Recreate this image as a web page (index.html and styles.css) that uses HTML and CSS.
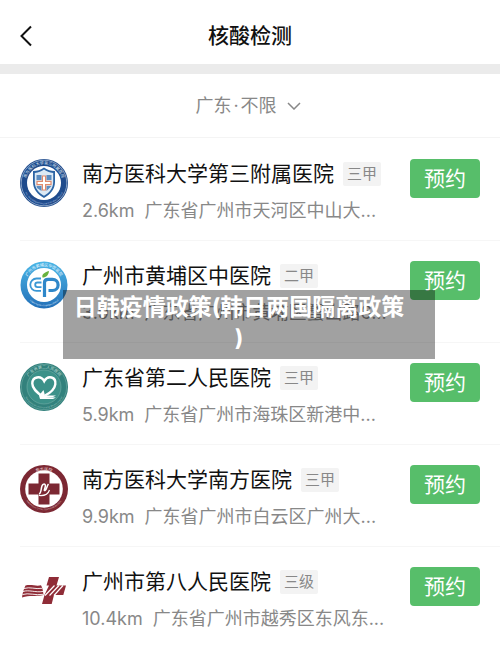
FILE: index.html
```
<!DOCTYPE html>
<html lang="zh-CN">
<head>
    <meta charset="UTF-8">
    <meta name="viewport" content="width=device-width, initial-scale=1.0">
    <title>核酸检测</title>
    <link rel="stylesheet" href="styles.css">
</head>
<body>

    <!-- Header -->
    <header class="header">
        <button type="button" class="back" aria-label="返回">
            <svg width="12" height="22" viewBox="0 0 12 22"><path d="M11 1.5L1.5 11L11 20.5"/></svg>
        </button>
        <h1>核酸检测</h1>
    </header>

    <!-- Region filter -->
    <div class="filter">
        <button type="button" class="filter-btn">
            <span>广东<span class="dot">·</span>不限</span>
            <svg width="14" height="8" viewBox="0 0 14 8"><path d="M1 1L7 7L13 1"/></svg>
        </button>
    </div>

    <!-- Hospital list -->
    <ul class="list">
        <li class="item">
            <svg class="logo" viewBox="0 0 48 48">
                <defs>
                    <path id="arcTop" d="M5.5 24a18.5 18.5 0 0 1 37 0"/>
                    <path id="arcBottom" d="M2.8 24a21.2 21.2 0 0 0 42.4 0"/>
                </defs>
                <circle cx="24" cy="24" r="24" fill="#1f4b8c"/>
                <circle cx="24" cy="24" r="22.8" fill="none" stroke="#c9d8ea" stroke-width=".6"/>
                <circle cx="24" cy="24" r="17" fill="#fff"/>
                <path d="M24 8.5C21 11 17 12 13 12V23c0 7 4.5 12.500 11 16c6.500-3.500 11-9 11-16V12C31 12 27 11 24 8.500z" fill="#2c64a4"/>
                <path d="M24 10.500C21.500 12.500 18.500 13.500 14.800 14v9c0 6 3.700 10.700 9.200 13.700c5.500-3 9.200-7.700 9.200-13.700v-9C29.500 13.500 26.500 12.500 24 10.500z" fill="#dbe9f5"/>
                <path d="M16.500 16h5v5h-5zM26.500 16h5v5h-5zM16.500 27h5v5L17 29zM26.500 27H31.500l-5 5z" fill="#5b8cc0"/>
                <path d="M22.400 17h3.200v5.400h5.400v3.200h-5.400V31h-3.200v-5.400H17v-3.200h5.400z" fill="#fff" stroke="#e08a6c" stroke-width="1.200"/>
                <text class="ring" fill="#dfe9f5"><textPath href="#arcTop" startOffset="50%">南方医科大学第三附属医院</textPath></text>
                <text class="ring ring-en" fill="#b5c8e0"><textPath href="#arcBottom" startOffset="50%">The Third Affiliated Hospital of Southern Medical</textPath></text>
            </svg>
            <div class="info">
                <div class="name"><h2>南方医科大学第三附属医院</h2><span class="tag">三甲</span></div>
                <p class="addr"><span class="km">2.6km</span>广东省广州市天河区中山大...</p>
            </div>
            <button type="button" class="book">预约</button>
        </li>

        <li class="item">
            <svg class="logo" viewBox="0 0 48 48">
                <defs>
                    <linearGradient id="blue" x1="0" y1="0" x2="0" y2="1">
                        <stop offset="0" stop-color="#4bb6e6"/>
                        <stop offset="1" stop-color="#2370b8"/>
                    </linearGradient>
                </defs>
                <circle cx="24" cy="24" r="23.5" fill="url(#blue)"/>
                <circle cx="24" cy="24" r="17" fill="#fff"/>
                <path d="M21 17.500h-4.500a6.200 6.200 0 0 0 0 12.400H21M21.500 21.500h-4a2.300 2.300 0 0 0 0 4.600h4" fill="none" stroke="#3a97d4" stroke-width="1.800"/>
                <path d="M24.500 36V21.500c0-2 1.500-3.200 3.500-3.200h4.500a5.500 5.500 0 0 1 0 11.200h-4" fill="none" stroke="#2f87c9" stroke-width="3.200"/>
                <path d="M22.500 16.500c-1-3 1.500-5 6.500-6.500c-.5 4-2.500 6.500-6.500 6.500z" fill="#68b23e"/>
                <text class="ring" fill="#e8f6ff"><textPath href="#arcTop" startOffset="50%">广州市黄埔区中医医院</textPath></text>
                <text class="ring ring-en" fill="#e0f0ff"><textPath href="#arcBottom" startOffset="50%">TCM Hospital of Huangpu District</textPath></text>
            </svg>
            <div class="info">
                <div class="name"><h2>广州市黄埔区中医院</h2><span class="tag">二甲</span></div>
                <p class="addr"><span class="km">3.9km</span>广东省广州市黄埔区蟹山路6...</p>
            </div>
            <button type="button" class="book">预约</button>
        </li>

        <li class="item">
            <svg class="logo" viewBox="0 0 48 48">
                <circle cx="24" cy="24" r="24" fill="#32817c"/>
                <circle cx="24" cy="24" r="22.6" fill="none" stroke="#7db3ad" stroke-width=".5"/>
                <circle cx="24" cy="24" r="17" fill="#3c9189" stroke="#74aea8" stroke-width=".6"/>
                <path d="M23.500 34C16 29 12.300 25.500 12.300 20.500c0-6.800 8.500-8.500 11.900-2.300C28 11.500 36.300 14 35.300 21.300c-.7 4.700-5.300 8.700-10.300 11.200" fill="none" stroke="#fff" stroke-width="2.400"/>
                <path d="M19 32.500l4.500-5.500l1.500 5.500h11l-3 1.600h-8L36 34.500l-3 1.500H20z" fill="#fff"/>
                <text class="ring" fill="#b4d8d2"><textPath href="#arcTop" startOffset="50%">广东省第二人民医院</textPath></text>
                <text class="ring ring-en" fill="#9cc8c2"><textPath href="#arcBottom" startOffset="50%">Guangdong Second Provincial General Hospital</textPath></text>
            </svg>
            <div class="info">
                <div class="name"><h2>广东省第二人民医院</h2><span class="tag">三甲</span></div>
                <p class="addr"><span class="km">5.9km</span>广东省广州市海珠区新港中...</p>
            </div>
            <button type="button" class="book">预约</button>
        </li>

        <li class="item">
            <svg class="logo" viewBox="0 0 48 48">
                <circle cx="24" cy="24" r="24" fill="#7c2833"/>
                <circle cx="24" cy="24" r="18.8" fill="#fff"/>
                <path d="M18.500 8.500h11v10h10v11h-10v10h-11v-10h-10v-11h10z" fill="#7c2833"/>
                <path d="M19 29c3-1 1.500-8 4-9.500c1.500-1 2.800 0 2.300 2c-.5 2.500-1.800 4.500-.3 4c2-.8 1.500-4.500 3.500-6.500" fill="none" stroke="#fff" stroke-width="1.500"/>
                <path d="M19 30.500c5 .5 9-1 10.500-5.500" fill="none" stroke="#fff" stroke-width="1.200"/>
                <text class="ring" fill="#f0dcdc"><textPath href="#arcTop" startOffset="50%">南方医院</textPath></text>
                <text class="ring ring-en" fill="#dcb8ba"><textPath href="#arcBottom" startOffset="50%">NANFANG HOSPITAL SOUTHERN MEDICAL</textPath></text>
            </svg>
            <div class="info">
                <div class="name"><h2>南方医科大学南方医院</h2><span class="tag">三甲</span></div>
                <p class="addr"><span class="km">9.9km</span>广东省广州市白云区广州大...</p>
            </div>
            <button type="button" class="book">预约</button>
        </li>

        <li class="item">
            <svg class="logo" viewBox="0 0 48 48">
                <path d="M29 10h10l-2.5 8.500H46L43.300 28H34l-2.300 9H22l2.500-9l4.500-9.500h-2.500z" fill="#8f2c37"/>
                <path d="M25 28.500l9.500-10M29.500 28.500l9.500-10M34 28.500l9-10" stroke="#fff" stroke-width="1.200"/>
                <path d="M5.500 18.500c6-1.500 10 1 15.500-.2c1.500 2.700 2 5.700 2.500 9.700c-8 2-14-.5-21.500 2.500c.5-4 1.500-8 3.500-12z" fill="#8f2c37"/>
                <path d="M4 21.500c6-2 11 1 18-.2M3 24.500c6-2 12 1.200 20 0M2.500 27.500c6-2 13 1.200 21-.2" fill="none" stroke="#fff" stroke-width=".9"/>
            </svg>
            <div class="info">
                <div class="name"><h2>广州市第八人民医院</h2><span class="tag">三级</span></div>
                <p class="addr"><span class="km">10.4km</span>广东省广州市越秀区东风东...</p>
            </div>
            <button type="button" class="book">预约</button>
        </li>
    </ul>

    <!-- Caption over the list -->
    <div class="caption">日韩疫情政策(韩日两国隔离政策<br>)</div>

</body>
</html>
```

FILE: styles.css
```
* {
    margin: 0;
    padding: 0;
    box-sizing: border-box;
}
body {
    position: relative;
    background: #fff;
    color: #111;
    font-family: Inter, "Noto Sans CJK SC", sans-serif;
}
button {
    border: none;
    background: none;
    font-family: inherit;
    cursor: pointer;
}
svg {
    display: block;
}
.header {
    display: grid;
    grid-template-columns: 40px 1fr 40px;
    align-items: center;
    height: 74px;
    padding: 7px 0 0;
    border-bottom: 10px solid #ebebeb;
}
.header h1 {
    font-size: 21px;
    line-height: 30px;
    font-weight: 500;
    text-align: center;
}
.back {
    padding-left: 20px;
}
.back path {
    fill: none;
    stroke: #111;
    stroke-width: 2;
}
.filter {
    display: flex;
    justify-content: center;
    align-items: center;
    height: 64px;
    padding-right: 4px;
    border-bottom: 1px solid #f4f4f4;
}
.filter-btn {
    display: flex;
    align-items: center;
    gap: 10px;
    font-size: 18px;
    line-height: 26px;
    color: #888;
}
.filter-btn path {
    fill: none;
    stroke: #888;
    stroke-width: 1.5;
}
.dot {
    margin: 0 2px;
}
.list {
    padding-top: 1px;
    list-style: none;
}
.item {
    display: flex;
    align-items: flex-start;
    gap: 14px;
    height: 102px;
    margin-left: 20px;
    padding: 20px 20px 0 0;
    border-bottom: 1px solid #f6f6f6;
}
.item:last-child {
    border-bottom: none;
}
.logo {
    flex: none;
    width: 48px;
    height: 48px;
}
.ring {
    font-size: 4px;
    text-anchor: middle;
}
.ring-en {
    font-size: 2px;
}
.info {
    flex: 1;
    min-width: 0;
    white-space: nowrap;
}
.name {
    display: flex;
    align-items: center;
    gap: 9px;
}
.name h2 {
    font-size: 21px;
    line-height: 30px;
    font-weight: 400;
}
.tag {
    padding: 0 4px;
    border-radius: 2px;
    background: #f3f3f3;
    color: #888;
    font-size: 15px;
    line-height: 24px;
}
.addr {
    margin-top: 9px;
    font-size: 18px;
    line-height: 26px;
    color: #888;
}
.km {
    margin-right: 10px;
}
.book {
    flex: none;
    width: 70px;
    height: 39px;
    border-radius: 4px;
    background: #57be6a;
    color: #fff;
    font-size: 21px;
    line-height: 30px;
}
.caption {
    position: absolute;
    top: 290px;
    left: 63px;
    right: 65px;
    padding: 2px 20px 5px 0;
    background: rgba(0, 0, 0, 0.37);
    color: #fff;
    font-size: 23px;
    line-height: 31px;
    font-weight: 700;
    text-align: center;
}
```
